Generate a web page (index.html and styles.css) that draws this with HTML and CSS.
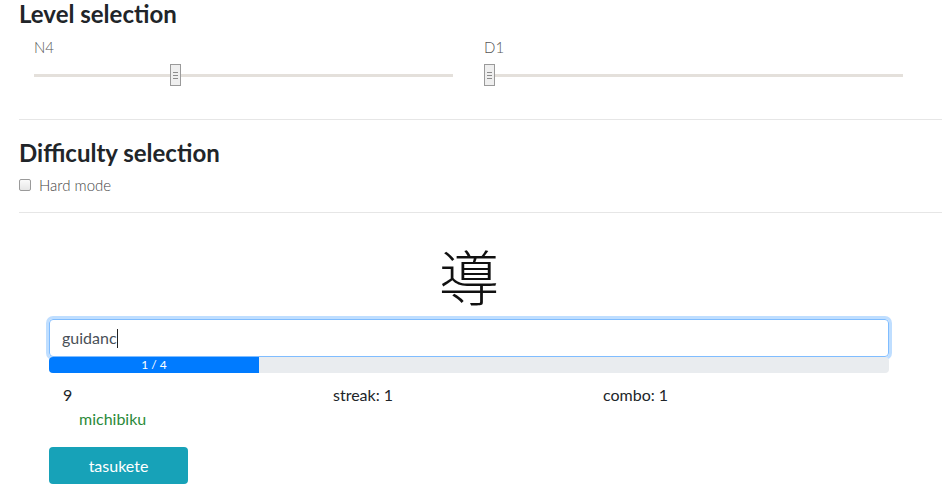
FILE: index.html
```html
<!DOCTYPE html>
<html lang="en">
<head>
<meta charset="utf-8">
<title>Kanji quiz</title>
<link rel="stylesheet" href="styles.css">
</head>
<body>
<div class="page">
  <section class="section">
    <h2 class="title">Level selection</h2>
    <div class="sliders">
      <div class="slider-col">
        <div class="slider-label">N4</div>
        <div class="track"><span class="thumb" style="left:136px"><i></i><i></i><i></i></span></div>
      </div>
      <div class="slider-col">
        <div class="slider-label">D1</div>
        <div class="track"><span class="thumb" style="left:0px"><i></i><i></i><i></i></span></div>
      </div>
    </div>
  </section>
  <hr class="rule">
  <section class="section">
    <h2 class="title title-2">Difficulty selection</h2>
    <label class="check"><input type="checkbox" class="box"><span>Hard mode</span></label>
  </section>
  <hr class="rule rule-2">
  <main class="quiz">
    <div class="kanji">導</div>
    <div class="answer-wrap">
      <div class="answer">guidanc<span class="caret"></span></div>
      <div class="progress"><div class="progress-bar" style="width:25%">1 / 4</div></div>
    </div>
    <div class="stats">
      <div>9</div>
      <div>streak: 1</div>
      <div>combo: 1</div>
    </div>
    <div class="reading">michibiku</div>
    <button class="help">tasukete</button>
  </main>
</div>
</body>
</html>
```
FILE: styles.css
```css
html, body {
  margin: 0;
  padding: 0;
  background: #fff;
}
body {
  font-family: Lato, "Liberation Sans", "Noto Sans CJK JP", sans-serif;
  color: #212529;
  font-size: 16px;
  line-height: 1.5;
  overflow: hidden;
}
.page {
  padding-left: 19px;
}
.section {
  width: 900px;
}
.title {
  margin: 0;
  font-size: 24px;
  font-weight: 700;
  line-height: 28px;
  color: #212529;
}
.sliders {
  display: grid;
  grid-template-columns: 450px 450px;
  margin-top: 10px;
}
.slider-col {
  padding: 0 15px;
}
.slider-label {
  font-size: 15px;
  font-weight: 300;
  color: #555;
  line-height: 18px;
}
.track {
  position: relative;
  width: 419px;
  height: 3px;
  background: #e4e0db;
  margin-top: 18px;
}
.thumb {
  position: absolute;
  top: -10px;
  width: 9px;
  height: 20px;
  border: 1px solid #9a9a9a;
  background: #efefef;
  display: flex;
  flex-direction: column;
  justify-content: center;
  align-items: center;
  gap: 2px;
}
.thumb i {
  display: block;
  width: 5px;
  height: 1px;
  background: #8c8c8c;
}
.rule {
  margin: 42px 0 0 0;
  border: 0;
  border-top: 1px solid #e6e6e6;
  width: 923px;
}
.title-2 {
  margin-top: 19px;
}
.check {
  display: flex;
  align-items: center;
  gap: 8px;
  margin-top: 8px;
  font-size: 15px;
  font-weight: 300;
  color: #444;
  line-height: 20px;
}
.box {
  appearance: none;
  -webkit-appearance: none;
  margin: 0;
  width: 12px;
  height: 12px;
  border: 1px solid #9a9a9a;
  border-radius: 2px;
  background: linear-gradient(#fafafa, #e6e6e6);
}
.rule-2 {
  margin-top: 17px;
}
.quiz {
  width: 900px;
  padding: 0 30px;
  box-sizing: border-box;
}
.kanji {
  text-align: center;
  font-family: "Noto Sans CJK JP", sans-serif;
  font-weight: 300;
  font-size: 60px;
  line-height: 64px;
  margin-top: 30px;
  color: #111;
}
.answer-wrap {
  margin-top: 12px;
}
.answer {
  height: 38px;
  box-sizing: border-box;
  border: 1px solid #80bdff;
  border-radius: 4px;
  box-shadow: 0 0 0 3px rgba(0, 123, 255, 0.25);
  padding: 6px 12px;
  font-size: 16px;
  color: #495057;
  line-height: 24px;
  display: flex;
  align-items: center;
}
.caret {
  display: inline-block;
  width: 1px;
  height: 19px;
  background: #222;
  margin-left: 0;
}
.progress {
  height: 16px;
  background: #e9ecef;
  border-radius: 4px;
  overflow: hidden;
}
.progress-bar {
  height: 100%;
  background: #007bff;
  color: #fff;
  font-size: 12px;
  line-height: 16px;
  text-align: center;
}
.stats {
  display: grid;
  grid-template-columns: 270px 270px 270px;
  padding-left: 14px;
  margin-top: 10px;
  font-size: 16px;
  line-height: 24px;
}
.reading {
  padding-left: 30px;
  color: #2a8a3a;
  line-height: 24px;
}
.help {
  margin-top: 16px;
  width: 139px;
  height: 37px;
  border: 0;
  border-radius: 4px;
  background: #17a2b8;
  color: #fff;
  font-family: inherit;
  font-size: 16px;
  cursor: pointer;
}
```
